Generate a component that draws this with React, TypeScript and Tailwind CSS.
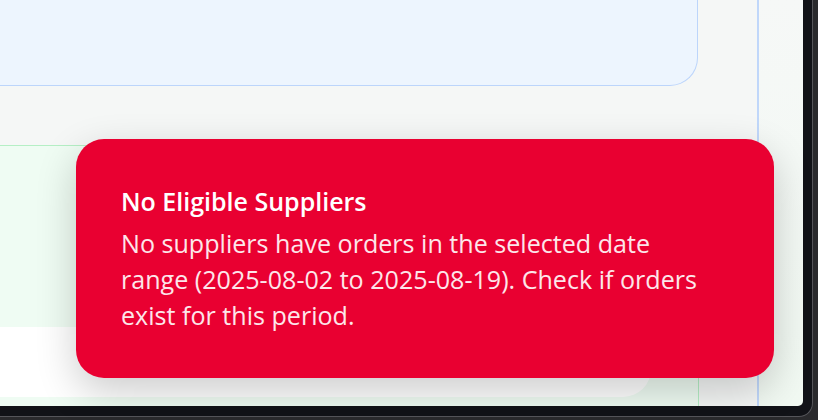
export default function App() {
  return (
    <div className="relative h-[420px] w-[818px] overflow-hidden bg-[#2a2a2d]" style={{ fontFamily: '"Open Sans", "Noto Sans", sans-serif' }}>
      {/* device frame */}
      <div className="h-[417px] w-[813px] rounded-br-[14px] border-b border-r border-[#55555a] bg-[#111217]">
        <div className="flex h-[406px] w-[803px] overflow-hidden rounded-br-[5px]">
          {/* main column */}
          <div className="flex w-[759px] shrink-0 flex-col border-r-2 border-[#c0d7fa] bg-[#f5f7f6]">
            <div className="-mt-10 h-[126px] w-[698px] shrink-0 rounded-br-[28px] border-b border-r border-[#bcd5fb] bg-[#edf5fe]" />
            <div className="mt-[59px] flex w-[699px] flex-1 flex-col border-r border-t border-[#b5efc5] bg-[#effcf3]">
              <div className="mt-[181px] h-[70px] w-[651px] rounded-br-[28px] bg-white" />
            </div>
          </div>
          {/* right panel */}
          <div className="flex-1 bg-gradient-to-b from-[#f6f8f7] to-[#f1f9f2]" />
        </div>
      </div>

      {/* toast */}
      <div className="absolute left-[76px] top-[139px] w-[698px] rounded-[28px] bg-[#e90031] pb-[45px] pl-[45px] pr-[61px] pt-[47px] shadow-[0_14px_40px_rgba(0,0,0,0.2)]">
        <h2 className="text-[25px] font-semibold leading-[30px] text-white">No Eligible Suppliers</h2>
        <p className="mt-[9px] text-[25.1px] leading-[36px] text-[#fde6ea]">
          No suppliers have orders in the selected date range (2025-08-02 to 2025-08-19). Check if orders exist for this period.
        </p>
      </div>
    </div>
  );
}
